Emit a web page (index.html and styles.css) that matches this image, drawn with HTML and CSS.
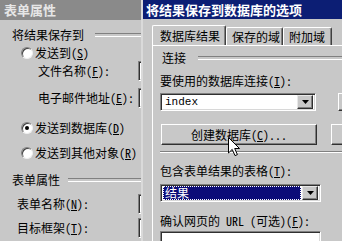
FILE: index.html
```html
<!DOCTYPE html>
<html lang="zh-CN">
  <head>
    <meta charset="UTF-8" />
    <meta name="viewport" content="width=device-width, initial-scale=1.0" />
    <title>将结果保存到数据库的选项</title>
    <link rel="stylesheet" href="styles.css">
  </head>
  <body>
    <div class="desktop">
      <!-- form properties window, behind -->
      <div class="form-props">
        <div class="caption caption-inactive">表单属性</div>
        <div class="props-body">
          <div class="group-head head-save">将结果保存到</div>
          <div class="radio-row"><span class="radio"></span>发送到(<u>S</u>)</div>
          <div class="field-row sub row-file">
            <span>文件名称(<u>F</u>):</span><span class="edit"></span>
          </div>
          <div class="field-row sub row-mail">
            <span>电子邮件地址(<u>E</u>):</span><span class="edit"></span>
          </div>
          <div class="radio-row row-db"><span class="radio checked"></span>发送到数据库(<u>D</u>)</div>
          <div class="radio-row row-other"><span class="radio"></span>发送到其他对象(<u>R</u>)</div>
          <div class="group-head head-form">表单属性</div>
          <div class="field-row row-name">
            <span>表单名称(<u>N</u>):</span><span class="edit"></span>
          </div>
          <div class="field-row row-frame">
            <span>目标框架(<u>T</u>):</span><span class="edit"></span>
          </div>
        </div>
      </div>

      <!-- options dialog -->
      <div class="dialog">
        <div class="caption caption-active">将结果保存到数据库的选项</div>
        <div class="dialog-body">
          <div class="tabs">
            <div class="tab tab-selected">数据库结果</div>
            <div class="tab tab-fields">保存的域</div>
            <div class="tab tab-extra">附加域</div>
          </div>
          <div class="tab-panel">
            <div class="group-head head-conn">连接</div>
            <div class="label row-conn-label">要使用的数据库连接(<u>I</u>):</div>
            <div class="ctl-row row-conn">
              <div class="combo">
                <span class="combo-text mono">index</span>
                <span class="combo-btn"><svg width="7" height="4" viewBox="0 0 7 4"><polygon points="0,0 7,0 3.5,4" fill="#000"/></svg></span>
              </div>
              <button class="btn btn-side"></button>
            </div>
            <div class="ctl-row row-create">
              <button class="btn btn-create">创建数据库(<u>C</u>)...</button>
              <button class="btn btn-side"></button>
            </div>
            <div class="separator"></div>
            <div class="label row-table-label">包含表单结果的表格(<u>T</u>):</div>
            <div class="ctl-row row-table">
              <div class="combo combo-wide">
                <span class="combo-text selected">结果</span>
                <span class="combo-btn"><svg width="7" height="4" viewBox="0 0 7 4"><polygon points="0,0 7,0 3.5,4" fill="#000"/></svg></span>
              </div>
            </div>
            <div class="label row-url-label">确认网页的 URL (可选)(<u>F</u>):</div>
            <div class="edit edit-url"></div>
          </div>
        </div>
      </div>
    </div>

    <svg class="cursor" width="13" height="20" viewBox="0 0 13 20">
      <path d="M0.5 0.5 L0.5 16 L4.2 12.4 L7 18.6 L9.4 17.6 L6.7 11.5 L11.5 11.5 Z" fill="#fff" stroke="#000" stroke-width="1"/>
    </svg>
  </body>
</html>
```

FILE: styles.css
```css
* {
  margin: 0;
  padding: 0;
  box-sizing: border-box;
  font-family: "Noto Sans Mono CJK SC", "Noto Sans CJK SC", "Liberation Sans", sans-serif;
}

body {
  background-color: #c8c8c8;
  color: #000;
  width: 342px;
  height: 241px;
  overflow: hidden;
  font-size: 12px;
  line-height: 16px;
}

.mono {
  font-family: "Liberation Mono", monospace;
  font-size: 11px;
}

u {
  text-decoration: underline;
  text-underline-offset: 1px;
}

.desktop {
  display: flex;
  height: 241px;
}

.caption {
  height: 19px;
  line-height: 19px;
  font-size: 13px;
  font-weight: bold;
  padding-left: 4px;
  white-space: nowrap;
  overflow: hidden;
}

.caption-inactive {
  background-color: #8a8a8a;
  color: #e6e6e6;
  height: 20px;
  line-height: 20px;
}

.caption-active {
  background-color: #0c1e74;
  color: #fff;
  padding-left: 3px;
}

/* left window */
.form-props {
  width: 141px;
  flex: none;
  overflow: hidden;
}

.props-body {
  width: 200px;
}

.group-head {
  display: flex;
  align-items: center;
  height: 16px;
  white-space: nowrap;
}

.group-head::after {
  content: "";
  flex: 1;
  height: 2px;
  border-top: 1px solid #808080;
  border-bottom: 1px solid #fff;
  margin-left: 11px;
}

.head-save {
  margin-top: 7px;
  padding-left: 12px;
}

.head-form {
  margin-top: 11px;
  padding-left: 12px;
}

.head-form::after {
  margin-left: 8px;
}

.radio-row {
  display: flex;
  align-items: center;
  height: 16px;
  margin-top: 2px;
  padding-left: 21px;
  white-space: nowrap;
}

.radio {
  width: 12px;
  height: 12px;
  border-radius: 50%;
  background-color: #fff;
  border: 1px solid;
  border-color: #808080 #f0f0f0 #f0f0f0 #808080;
  box-shadow: inset 1px 1px #404040;
  margin-right: 2px;
  display: flex;
  align-items: center;
  justify-content: center;
}

.radio.checked::after {
  content: "";
  width: 4px;
  height: 4px;
  border-radius: 50%;
  background-color: #000;
}

.row-db {
  margin-top: 12px;
}

.row-other {
  margin-top: 9px;
}

.field-row {
  display: grid;
  grid-template-columns: 138px 60px;
  align-items: center;
  height: 20px;
  white-space: nowrap;
  padding-left: 17px;
}

.field-row.sub {
  padding-left: 38px;
  grid-template-columns: 100px 60px;
}

.row-file {
  margin-top: 0;
}

.row-mail {
  margin-top: 7px;
}

.row-name {
  margin-top: 6px;
  grid-template-columns: 121px 60px;
}

.row-frame {
  margin-top: 4px;
  grid-template-columns: 121px 60px;
}

.edit {
  height: 20px;
  background-color: #fff;
  border: 1px solid;
  border-color: #808080 #fff #fff #808080;
  box-shadow: inset 1px 1px #303030, inset -1px -1px #d8d8d8;
}

/* dialog */
.dialog {
  flex: 1;
  min-width: 0;
  overflow: hidden;
  border-left: 2px solid #dadada;
}

.dialog-body {
  padding: 6px 0 0 9px;
}

.tabs {
  display: flex;
  align-items: flex-end;
  height: 20px;
}

.tab {
  height: 18px;
  line-height: 17px;
  padding: 0 5px;
  white-space: nowrap;
  border-top: 1px solid #fff;
  border-left: 1px solid #fff;
  border-right: 1px solid #404040;
  box-shadow: inset -1px 0 #808080;
  border-radius: 2px 2px 0 0;
}

.tab-selected {
  height: 20px;
  line-height: 19px;
  width: 74px;
  padding: 0 7px;
}

.tab-fields {
  width: 57px;
}

.tab-extra {
  width: 49px;
}

.tab-panel {
  border-top: 1px solid #fff;
  border-left: 1px solid #fff;
  height: 200px;
}

.head-conn {
  margin-top: 4px;
  padding-left: 9px;
}

.head-conn::after {
  margin-left: 12px;
}

.label {
  height: 16px;
  padding-left: 7px;
  white-space: nowrap;
}

.row-conn-label {
  margin-top: 7px;
}

.ctl-row {
  display: flex;
  padding-left: 7px;
  white-space: nowrap;
}

.row-conn {
  margin-top: 4px;
  gap: 22px;
  height: 18px;
}

.combo {
  width: 156px;
  flex: none;
  display: flex;
  align-items: center;
  background-color: #fff;
  border: 1px solid;
  border-color: #808080 #fff #fff #808080;
  box-shadow: inset 1px 1px #303030, inset -1px -1px #d8d8d8;
  padding: 2px;
}

.combo-wide {
  width: 161px;
}

.combo-text {
  flex: 1;
  height: 14px;
  line-height: 14px;
  padding-left: 2px;
}

.combo-text.selected {
  background-color: #0c0c78;
  color: #fff;
  outline: 1px dotted #fff;
  outline-offset: -1px;
  margin-right: 1px;
}

.combo-btn {
  width: 16px;
  height: 14px;
  flex: none;
  display: flex;
  align-items: center;
  justify-content: center;
  background-color: #c8c8c8;
  border: 1px solid;
  border-color: #e8e8e8 #303030 #303030 #e8e8e8;
  box-shadow: inset -1px -1px #808080;
}

.btn {
  flex: none;
  height: 21px;
  background-color: #c8c8c8;
  border: 1px solid;
  border-color: #fff #303030 #303030 #fff;
  box-shadow: inset -1px -1px #808080;
  font-size: 12px;
  line-height: 16px;
  color: #000;
  font-family: "Noto Sans Mono CJK SC", "Noto Sans CJK SC", sans-serif;
}

.btn-side {
  width: 60px;
  height: 18px;
}

.row-create {
  margin-top: 13px;
  gap: 14px;
}

.row-create .btn-side {
  height: 21px;
}

.btn-create {
  width: 156px;
  margin-left: 1px;
}

.separator {
  margin: 6px 0 0 7px;
  height: 2px;
  border-top: 1px solid #808080;
  border-bottom: 1px solid #fff;
}

.row-table-label {
  margin-top: 10px;
}

.row-table {
  margin-top: 5px;
  height: 18px;
}

.row-url-label {
  margin-top: 11px;
}

.edit-url {
  margin: 2px 0 0 7px;
  width: 161px;
}

.cursor {
  position: absolute;
  left: 228px;
  top: 137px;
}
```
